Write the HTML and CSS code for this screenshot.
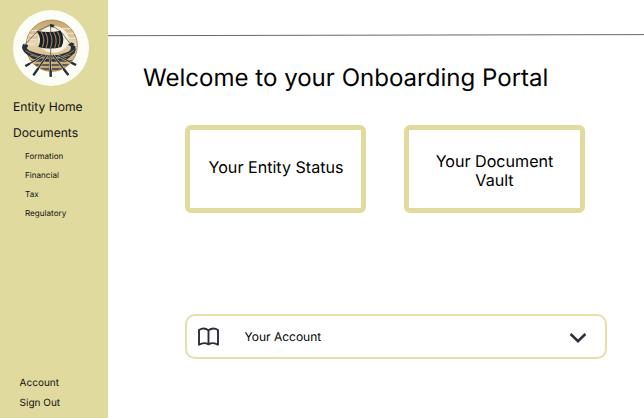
FILE: index.html
```html
<!DOCTYPE html>
<html lang="en">
<head>
<meta charset="utf-8">
<title>Onboarding Portal</title>
<link rel="stylesheet" href="styles.css">
</head>
<body>
<div class="app">
  <nav class="sidebar">
    <svg class="logo" viewBox="15 16 228 228">
      <defs>
        <linearGradient id="sky" x1="0" y1="0" x2="0" y2="1">
          <stop offset="0" stop-color="#c4a16a"/>
          <stop offset=".45" stop-color="#e6d5b4"/>
          <stop offset="1" stop-color="#c79c5c"/>
        </linearGradient>
        <clipPath id="disc"><circle cx="131" cy="123" r="76"/></clipPath>
      </defs>
      <circle cx="129" cy="130" r="114" fill="#fcfdf6"/>
      <circle cx="131" cy="123" r="77" fill="url(#sky)" stroke="#b58e55" stroke-width="3"/>
      <g clip-path="url(#disc)">
        <ellipse cx="136" cy="104" rx="46" ry="40" fill="#f8f1df"/>
        <path d="M50 78H95M54 91H88M50 105H86M160 72H208M166 86H210M168 101H210M54 118H82M174 116H205" stroke="#f0e2c4" stroke-width="4"/>
        <path d="M66 169H198M76 181H188M90 193H174" stroke="#38414a" stroke-width="4"/>
      </g>
      <path d="M128 58V152M89 79L48 123M160 82L190 122M128 60L89 79M128 60L158 80" stroke="#39434c" stroke-width="2" fill="none"/>
      <path d="M127 70V58L141 61L135 65L139 69L129 67" fill="#1d2a38"/>
      <path d="M86 79Q124 86 158 78Q173 104 160 127Q126 136 91 127Q103 101 86 79Z" fill="#17212d"/>
      <path d="M100 82Q113 104 103 128M112 83Q125 106 114 130M125 83Q138 106 127 131M137 82Q150 105 140 129M148 81Q162 104 151 127" stroke="#9c7c4e" stroke-width="3.5" fill="none"/>
      <path d="M49 116Q40 122 43 133Q47 143 56 149L75 163Q129 177 180 162L200 145Q205 135 202 125L196 122L200 117L190 113L180 121L188 125Q191 137 179 142Q154 153 128 152Q97 151 76 142Q62 139 55 130Q61 129 60 122Q55 116 49 121Z" fill="#26313c"/>
      <path d="M53 138Q91 162 128 160Q168 160 198 137M67 151Q130 174 188 151" fill="none" stroke="#a18052" stroke-width="3"/>
      <path d="M118 151L77 211M126 151L128 216M135 151L181 211M105 153L53 184M150 153L204 181" stroke="#e5d3ae" stroke-width="7"/>
      <path d="M118 151L77 211M126 151L128 216M135 151L181 211M105 153L53 184M150 153L204 181" stroke="#26313c" stroke-width="4"/>
      <path d="M90 192L76 212M128 197V216M167 193L181 211M65 177L52 184M190 174L204 181" stroke="#26313c" stroke-width="7"/>
    </svg>
    <ul class="menu">
      <li>Entity Home</li>
      <li>Documents</li>
    </ul>
    <ul class="submenu">
      <li>Formation</li>
      <li>Financial</li>
      <li>Tax</li>
      <li>Regulatory</li>
    </ul>
    <ul class="user-menu">
      <li>Account</li>
      <li>Sign Out</li>
    </ul>
  </nav>
  <main class="content">
    <svg class="rule" viewBox="0 0 537 4"><path d="M0 2.7L537 1.6" stroke="#000" stroke-width=".6"/></svg>
    <h1>Welcome to your Onboarding Portal</h1>
    <div class="cards">
      <section class="card status">Your Entity Status</section>
      <section class="card vault">Your Document<br>Vault</section>
    </div>
    <section class="account">
      <svg class="book" viewBox="0 0 24 20"><path d="M12.5 3.3Q7.8-.1 3 3V17.8Q7.8 14.6 12.5 17.4Q17.2 14.6 22 17.8V3Q17.2-.1 12.5 3.3V17.4" fill="none" stroke="#2c2d3a" stroke-width="1.9" stroke-linejoin="round"/></svg>
      <span>Your Account</span>
      <svg class="chevron" viewBox="0 0 18 12"><path d="M1.6 2L9 9.2L16.4 2" fill="none" stroke="#2c2d3a" stroke-width="2.5"/></svg>
    </section>
  </main>
</div>
</body>
</html>
```

FILE: styles.css
```css
* { box-sizing: border-box; }
body {
  margin: 0;
  background: #fff;
  color: #000;
  font-family: Inter, sans-serif;
  text-rendering: geometricPrecision;
}
ul { list-style: none; margin: 0; padding: 0; }
svg { display: block; flex: none; }
.app { display: flex; width: 644px; height: 418px; overflow: hidden; }
.sidebar {
  display: flex;
  flex-direction: column;
  flex: none;
  width: 107.5px;
  padding: 10px 0 5px 13px;
  background: #e0da9e;
  color: #111;
}
.logo { width: 76px; height: 76px; }
.menu { margin-top: 8px; font-size: 12.1px; line-height: 25.5px; white-space: nowrap; }
.submenu { margin: 1.6px 0 0 12px; font-size: 8.1px; line-height: 19.25px; }
.user-menu { margin: auto 0 0 6.6px; font-size: 10px; line-height: 20px; }
.content { flex: 1; min-width: 0; padding-top: 33px; }
.rule { width: 537px; height: 4px; }
h1 {
  margin: 26px 0 0 35.5px;
  font-size: 24.05px;
  font-weight: 400;
  line-height: 30px;
  white-space: nowrap;
}
.cards { display: flex; gap: 38px; margin: 32px 0 0 77.5px; }
.card {
  display: flex;
  align-items: center;
  justify-content: center;
  width: 181px;
  height: 88px;
  border: 5px solid #e0da9e;
  border-radius: 6px;
  font-size: 16.1px;
  line-height: 19px;
  text-align: center;
}
.status { padding: 0 0 3px 1px; }
.vault { padding-top: 4px; }
.account {
  display: flex;
  align-items: center;
  width: 422px;
  height: 45px;
  margin: 101px 0 0 77.5px;
  padding: 0 18px 0 9px;
  border: 2px solid #e4dfac;
  border-radius: 10px;
  font-size: 12px;
}
.book { width: 24px; height: 20px; margin: 1px 24.5px 0 0; }
.chevron { width: 18px; height: 12px; margin: 2px 0 0 auto; }
```
